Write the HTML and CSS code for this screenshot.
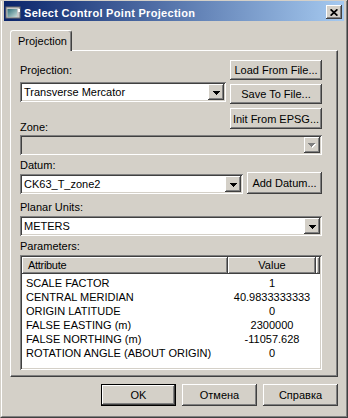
FILE: index.html
```html
<!DOCTYPE html>
<html lang="en">
<head>
    <meta charset="UTF-8">
    <title>Select Control Point Projection</title>
    <link rel="stylesheet" href="styles.css">
</head>
<body>
    <div class="window">
        <div class="frame">
            <div class="titlebar">
                <svg class="app-icon" width="16" height="16" viewBox="0 0 16 16">
                    <defs>
                        <linearGradient id="ig" x1="0" y1="0" x2="1" y2="1">
                            <stop offset="0" stop-color="#2f6f7a"/>
                            <stop offset="1" stop-color="#c8dcd8"/>
                        </linearGradient>
                    </defs>
                    <rect x="1" y="3" width="14" height="11" fill="#c8c8c8" stroke="#707070" stroke-width="1"/>
                    <rect x="2.5" y="5" width="9.5" height="8" fill="url(#ig)"/>
                    <rect x="13" y="5" width="2" height="3" fill="#ffffff"/>
                </svg>
                <span class="title">Select Control Point Projection</span>
                <span class="close-btn">
                    <svg width="8" height="7" viewBox="0 0 8 7">
                        <path d="M0.6 0.3 L7.4 6.7 M7.4 0.3 L0.6 6.7" stroke="#000" stroke-width="1.7"/>
                    </svg>
                </span>
            </div>

            <div class="client">
                <div class="tabs">
                    <div class="tab">Projection</div>
                </div>

                <div class="panel">
                    <div class="top-section">
                        <div class="proj-col">
                            <div class="label lbl-projection">Projection:</div>
                            <div class="combo">
                                <span class="combo-text">Transverse Mercator</span>
                                <span class="drop-btn"><svg width="7" height="4" viewBox="0 0 7 4"><path d="M0 0h7v1h-1v1h-1v1h-1v1h-1v-1h-1v-1h-1v-1h-1z" fill="#000"/></svg></span>
                            </div>
                            <div class="label lbl-zone">Zone:</div>
                        </div>
                        <div class="file-col">
                            <button class="btn">Load From File...</button>
                            <button class="btn">Save To File...</button>
                            <button class="btn btn-tall">Init From EPSG...</button>
                        </div>
                    </div>

                    <div class="combo disabled">
                        <span class="combo-text"></span>
                        <span class="drop-btn"><svg width="8" height="5" viewBox="0 0 8 5"><path d="M1 1h7v1h-1v1h-1v1h-1v1h-1v-1h-1v-1h-1v-1h-1z" fill="#fff"/><path d="M0 0h7v1h-1v1h-1v1h-1v1h-1v-1h-1v-1h-1v-1h-1z" fill="#808080"/></svg></span>
                    </div>

                    <div class="label lbl-datum">Datum:</div>
                    <div class="datum-row">
                        <div class="combo combo-datum">
                            <span class="combo-text">CK63_T_zone2</span>
                            <span class="drop-btn"><svg width="7" height="4" viewBox="0 0 7 4"><path d="M0 0h7v1h-1v1h-1v1h-1v1h-1v-1h-1v-1h-1v-1h-1z" fill="#000"/></svg></span>
                        </div>
                        <button class="btn btn-add">Add Datum...</button>
                    </div>

                    <div class="label lbl-units">Planar Units:</div>
                    <div class="combo">
                        <span class="combo-text">METERS</span>
                        <span class="drop-btn"><svg width="7" height="4" viewBox="0 0 7 4"><path d="M0 0h7v1h-1v1h-1v1h-1v1h-1v-1h-1v-1h-1v-1h-1z" fill="#000"/></svg></span>
                    </div>

                    <div class="label lbl-params">Parameters:</div>
                    <div class="list">
                        <div class="list-header">
                            <div class="hcell hcell-attr">Attribute</div>
                            <div class="hcell hcell-value">Value</div>
                            <div class="hcell hcell-fill"></div>
                        </div>
                        <div class="list-body">
                            <div class="list-row"><span class="cell-attr">SCALE FACTOR</span><span class="cell-value">1</span></div>
                            <div class="list-row"><span class="cell-attr">CENTRAL MERIDIAN</span><span class="cell-value">40.9833333333</span></div>
                            <div class="list-row"><span class="cell-attr">ORIGIN LATITUDE</span><span class="cell-value">0</span></div>
                            <div class="list-row"><span class="cell-attr">FALSE EASTING (m)</span><span class="cell-value">2300000</span></div>
                            <div class="list-row"><span class="cell-attr">FALSE NORTHING (m)</span><span class="cell-value">-11057.628</span></div>
                            <div class="list-row"><span class="cell-attr">ROTATION ANGLE (ABOUT ORIGIN)</span><span class="cell-value">0</span></div>
                        </div>
                    </div>
                </div>

                <div class="dialog-buttons">
                    <button class="btn btn-dialog btn-ok">OK</button>
                    <button class="btn btn-dialog">Отмена</button>
                    <button class="btn btn-dialog">Справка</button>
                </div>
            </div>
        </div>
    </div>
</body>
</html>
```

FILE: styles.css
```css
* {
    box-sizing: border-box;
}

body {
    margin: 0;
    font-family: "Liberation Sans", Arial, sans-serif;
    font-size: 11px;
    color: #000;
    background-color: #d4d0c8;
}

.window {
    width: 348px;
    height: 418px;
    padding-top: 1px;
    background-color: #d4d0c8;
    border-left: 1px solid #d4d0c8;
    border-right: 1px solid #404040;
    border-bottom: 1px solid #404040;
}

.frame {
    height: 100%;
    display: flex;
    flex-direction: column;
    padding: 0 2px 2px 2px;
    border-left: 1px solid #fff;
    border-right: 1px solid #808080;
    border-bottom: 1px solid #808080;
}

/* title bar */
.titlebar {
    height: 20px;
    display: flex;
    color: #fff;
    background: linear-gradient(to right, #0a246a, #a6caf0);
}

.app-icon {
    margin: 3px 3px 0 1px;
    flex-shrink: 0;
}

.title {
    flex: 1;
    font-weight: bold;
    line-height: 14px;
    padding-top: 5px;
    letter-spacing: 0.3px;
    white-space: nowrap;
}

.close-btn {
    width: 16px;
    height: 14px;
    margin: 4px 2px 0 0;
    display: flex;
    align-items: center;
    justify-content: center;
    background-color: #d4d0c8;
    box-shadow: inset -1px -1px #404040, inset 1px 1px #fff, inset -2px -2px #808080;
}

/* client area */
.client {
    flex: 1;
    display: flex;
    flex-direction: column;
    padding: 9px 6px 0 6px;
}

.tabs {
    display: flex;
    height: 20px;
}

.tab {
    position: relative;
    z-index: 1;
    width: 62px;
    height: 21px;
    padding: 1px 0 0 7px;
    line-height: 19px;
    background-color: #d4d0c8;
    border-top: 1px solid #fff;
    border-left: 1px solid #fff;
    border-right: 1px solid #404040;
    border-radius: 3px 3px 0 0;
    box-shadow: inset -1px 0 #808080;
}

.panel {
    height: 327px;
    padding: 9px 15px 0 9px;
    border: 1px solid;
    border-color: #fff #404040 #404040 #fff;
    box-shadow: inset -1px -1px #808080;
}

.label {
    line-height: 14px;
    white-space: nowrap;
}

.lbl-projection {
    padding: 3px 0 5px;
}

.lbl-zone {
    padding: 18px 0 1px;
}

.lbl-datum {
    padding: 3px 0 0;
}

.lbl-units {
    padding: 6px 0 2px;
}

.lbl-params {
    padding: 3px 0 2px;
}

.top-section {
    display: flex;
    gap: 4px;
}

.proj-col {
    width: 206px;
}

.file-col {
    flex: 1;
    display: flex;
    flex-direction: column;
    gap: 4px;
}

/* buttons */
.btn {
    height: 20px;
    padding: 0;
    font: inherit;
    color: #000;
    border: none;
    background-color: #d4d0c8;
    box-shadow: inset -1px -1px #404040, inset 1px 1px #fff, inset -2px -2px #808080;
    white-space: nowrap;
}

.btn-tall {
    height: 21px;
}

/* combo boxes */
.combo {
    height: 20px;
    display: flex;
    align-items: center;
    padding: 2px;
    background-color: #fff;
    box-shadow: inset 1px 1px #808080, inset -1px -1px #fff, inset 2px 2px #404040, inset -2px -2px #d4d0c8;
}

.combo.disabled {
    background-color: #d4d0c8;
}

.combo-text {
    flex: 1;
    padding-left: 2px;
    line-height: 16px;
    white-space: nowrap;
}

.drop-btn {
    width: 16px;
    height: 16px;
    display: flex;
    align-items: center;
    justify-content: center;
    padding-top: 1px;
    background-color: #d4d0c8;
    box-shadow: inset -1px -1px #404040, inset 1px 1px #fff, inset -2px -2px #808080;
}

.datum-row {
    display: flex;
    align-items: flex-end;
    gap: 4px;
    height: 22px;
}

.combo-datum {
    width: 223px;
}

.btn-add {
    flex: 1;
    height: 22px;
}

/* parameter list */
.list {
    height: 115px;
    padding: 2px;
    background-color: #fff;
    box-shadow: inset 1px 1px #808080, inset -1px -1px #fff, inset 2px 2px #404040, inset -2px -2px #d4d0c8;
}

.list-header {
    display: flex;
    height: 17px;
}

.hcell {
    line-height: 17px;
    background-color: #d4d0c8;
    box-shadow: inset -1px -1px #404040, inset 1px 1px #fff, inset -2px -2px #808080;
    white-space: nowrap;
}

.hcell-attr {
    width: 206px;
    padding-left: 6px;
    letter-spacing: -0.3px;
}

.hcell-value {
    width: 88px;
    text-align: center;
}

.hcell-fill {
    flex: 1;
}

.list-body {
    padding-top: 2px;
}

.list-row {
    display: flex;
    line-height: 14px;
    white-space: nowrap;
}

.cell-attr {
    width: 206px;
    padding-left: 4px;
}

.cell-value {
    width: 88px;
    text-align: center;
}

/* dialog buttons */
.dialog-buttons {
    display: flex;
    justify-content: flex-end;
    gap: 6px;
    margin-top: 7px;
}

.btn-dialog {
    width: 75px;
    height: 22px;
}

.btn-ok {
    border: 1px solid #000;
}
```
